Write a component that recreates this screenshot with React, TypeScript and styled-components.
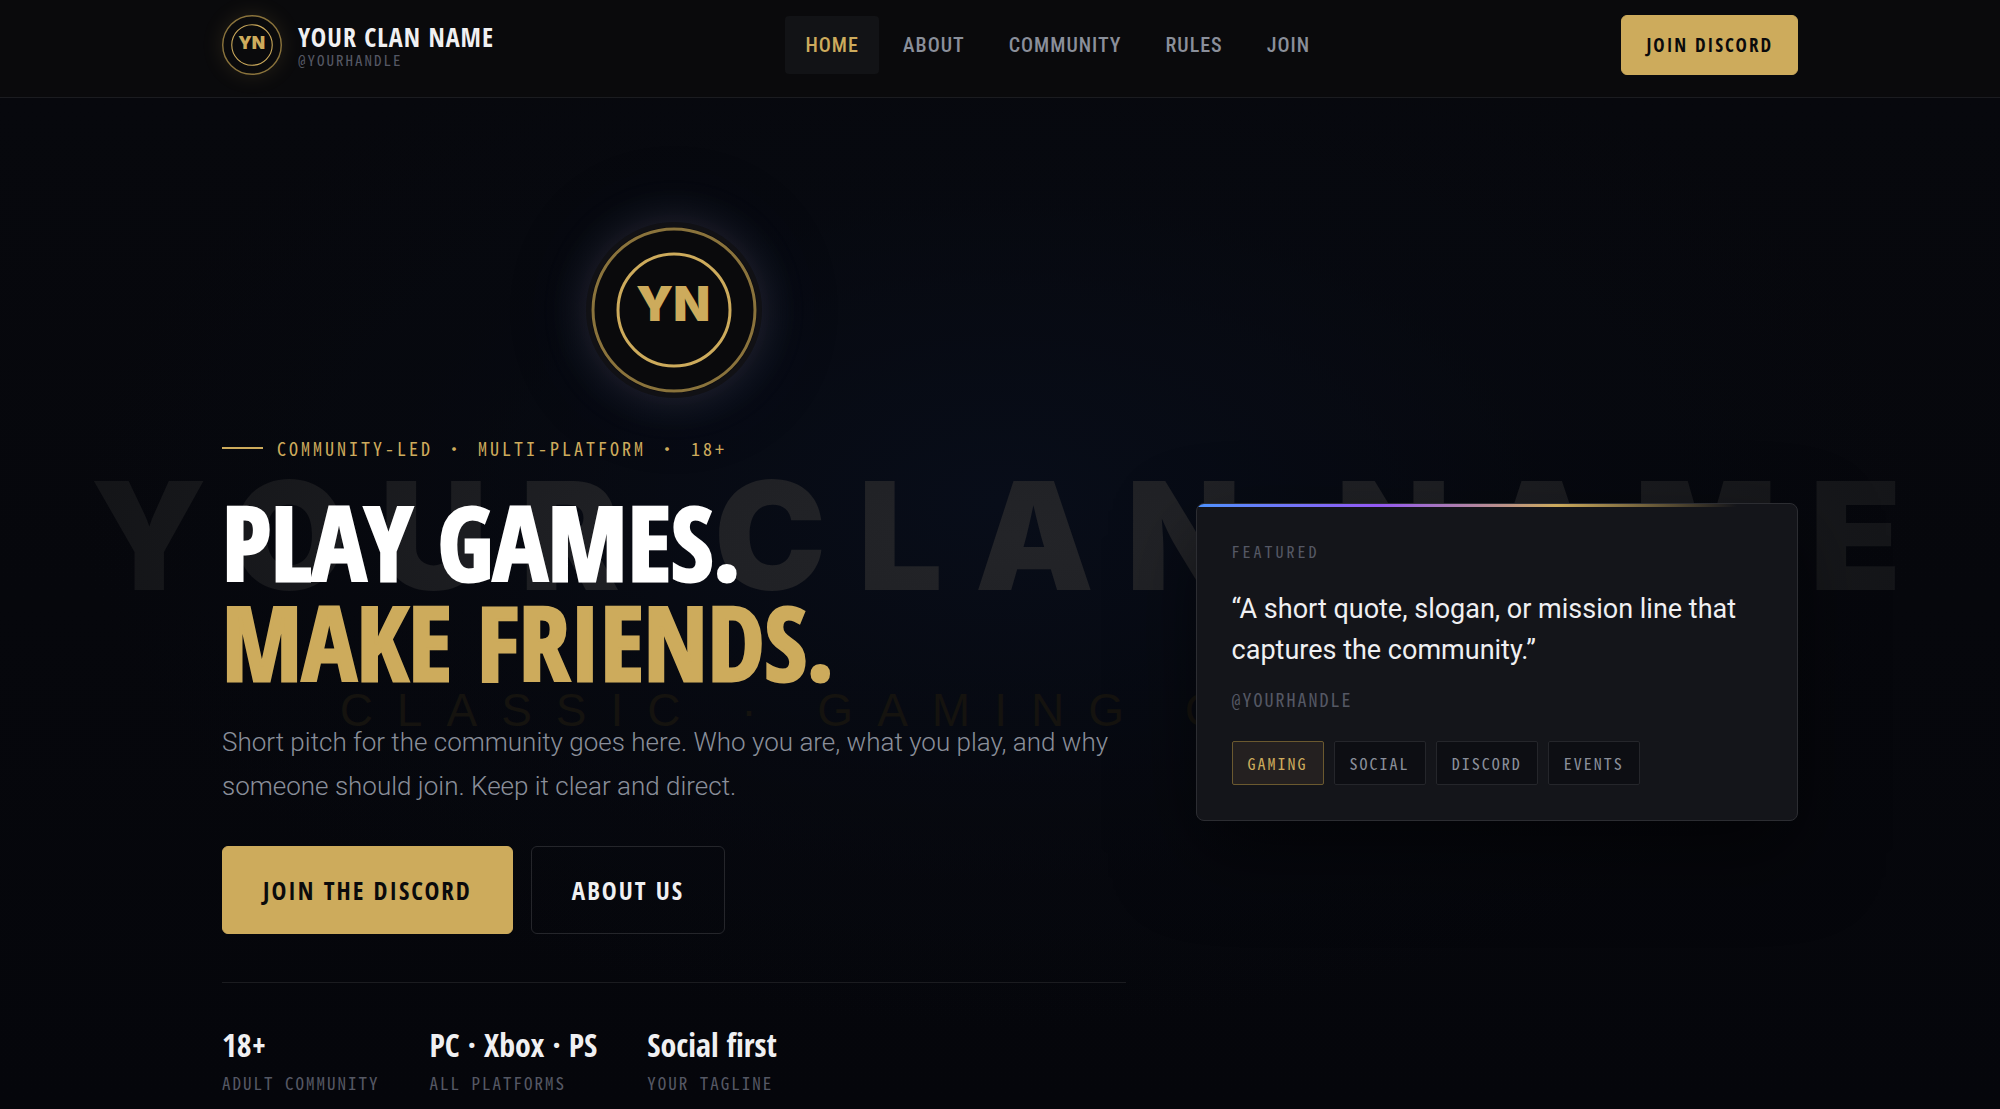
import React from 'react';
import styled, { createGlobalStyle, ThemeProvider } from 'styled-components';

const theme = {
  gold: '#cdab5c',
  white: '#f0f0f2',
  muted: '#8a8f9a',
  dim: '#555864',
  ink: '#0a0a0c',
  card: '#14151a',
  line: '#1b1c20',
  display: '"Open Sans Condensed", "Roboto Condensed", "Open Sans", sans-serif',
  condensed: '"Roboto Condensed", Roboto, sans-serif',
  body: 'Roboto, "Liberation Sans", sans-serif',
  mono: '"Noto Sans Mono CJK SC", "Roboto Mono", "Liberation Mono", monospace',
  black: 'Inter, "Liberation Sans", sans-serif',
};

const GlobalStyle = createGlobalStyle`
  *, *::before, *::after { box-sizing: border-box; }
  html { background: #05060b; }
  body {
    margin: 0;
    color: #f0f0f2;
    font-family: Roboto, "Liberation Sans", sans-serif;
    overflow-x: hidden;
  }
  h1, p, figure, blockquote, dl, dd, ul { margin: 0; padding: 0; }
  a { color: inherit; text-decoration: none; }
`;

const Page = styled.div`
  display: flex;
  flex-direction: column;
  min-height: 100vh;
`;

const Header = styled.header`
  padding-left: 20px;
  background: ${p => p.theme.ink};
  border-bottom: 1px solid ${p => p.theme.line};
`;

const Container = styled.div`
  width: 100%;
  max-width: 1576px;
  margin: 0 auto;
`;

const HeaderBar = styled(Container)`
  display: flex;
  align-items: center;
  justify-content: space-between;
  padding: 15px 0 22px;
`;

const Brand = styled.a`
  display: flex;
  align-items: center;
  gap: 16px;
`;

const BrandText = styled.span`
  display: flex;
  flex-direction: column;
  padding-top: 4px;
`;

const BrandName = styled.span`
  font: 700 26px/26px ${p => p.theme.display};
  letter-spacing: 1px;
`;

const Handle = styled.span`
  color: ${p => p.theme.dim};
  font: 400 15px/20px ${p => p.theme.mono};
  letter-spacing: 2px;
`;

const Nav = styled.nav`
  display: flex;
  gap: 4px;
`;

const NavLink = styled.a<{ $active?: boolean }>`
  padding: 0 20px;
  border-radius: 4px;
  color: ${p => (p.$active ? p.theme.gold : p.theme.muted)};
  background: ${p => (p.$active ? '#121316' : 'transparent')};
  font: 500 20px/58px ${p => p.theme.condensed};
  letter-spacing: 1px;
`;

const Button = styled.a<{ $large?: boolean; $outline?: boolean }>`
  display: inline-flex;
  align-items: center;
  height: ${p => (p.$large ? 88 : 60)}px;
  padding: 0 ${p => (p.$large ? 40 : 24)}px;
  border: 1px solid ${p => (p.$outline ? '#25262b' : p.theme.gold)};
  border-radius: 6px;
  background: ${p => (p.$outline ? 'transparent' : p.theme.gold)};
  color: ${p => (p.$outline ? p.theme.white : p.theme.ink)};
  font: 700 ${p => (p.$large ? 25 : 19)}px/32px ${p => p.theme.display};
  letter-spacing: 2px;
  white-space: nowrap;
`;

const Badge = styled.span<{ $hero?: boolean }>`
  display: block;
  flex: none;
  width: ${p => (p.$hero ? 176 : 60)}px;
  height: ${p => (p.$hero ? 176 : 60)}px;
  border: ${p => (p.$hero ? '5px solid #111115' : '0')};
  border-radius: 50%;
  background: ${p => p.theme.ink};
  box-shadow: ${p =>
    p.$hero
      ? '0 0 46px rgba(190, 180, 215, 0.18), 0 0 110px rgba(40, 60, 120, 0.08)'
      : '0 0 22px rgba(205, 171, 92, 0.14)'};
  svg { display: block; width: 100%; height: 100%; }
`;

const EmblemText = styled.text`
  fill: ${p => p.theme.gold};
  font: 900 48px ${p => p.theme.black};
  text-anchor: middle;
`;

const Hero = styled.main`
  position: relative;
  flex: 1;
  padding: 124px 0 0 20px;
  overflow: hidden;
  background:
    radial-gradient(ellipse 46% 52% at 50% 40%, #080d19 0%, rgba(7, 10, 18, 0.5) 60%, transparent 100%),
    linear-gradient(#07080d, #05060b);
`;

const Watermark = styled.div`
  position: absolute;
  inset: 0 0 0 24px;
  display: flex;
  flex-direction: column;
  align-items: center;
  justify-content: center;
  gap: 52px;
  white-space: nowrap;
  user-select: none;
`;

const WatermarkTitle = styled.span`
  font: 900 150px/160px ${p => p.theme.black};
  letter-spacing: 32px;
  color: transparent;
  background: radial-gradient(ellipse 55% 200% at 50% 50%, #232428 0%, #1f2024 40%, #121316 100%);
  background-clip: text;
  -webkit-background-clip: text;
`;

const WatermarkSub = styled.span`
  color: #15130f;
  font: 400 46px/84px "Liberation Sans", Arial, sans-serif;
  letter-spacing: 24px;
`;

const HeroGrid = styled(Container)`
  position: relative;
  display: grid;
  grid-template-columns: minmax(0, 3fr) minmax(0, 2fr);
  gap: 70px;
  align-items: center;
`;

const Intro = styled.section`
  display: flex;
  flex-direction: column;
  padding-bottom: 8px;
`;

const EmblemRow = styled.div`
  display: flex;
  justify-content: center;
  margin-bottom: 38px;
`;

const Eyebrow = styled.p`
  display: flex;
  align-items: center;
  gap: 14px;
  margin-bottom: 32px;
  color: ${p => p.theme.gold};
  font: 400 18px/24px ${p => p.theme.mono};
  letter-spacing: 3px;
  &::before {
    content: '';
    width: 41px;
    height: 2px;
    background: ${p => p.theme.gold};
  }
`;

const Headline = styled.h1`
  margin-bottom: 28px;
  font: 700 102px/100px ${p => p.theme.display};
`;

const HeadlineLine = styled.span<{ $gold?: boolean }>`
  display: block;
  color: ${p => (p.$gold ? p.theme.gold : '#fff')};
  -webkit-text-stroke: 3px ${p => (p.$gold ? p.theme.gold : '#fff')};
`;

const Pitch = styled.p`
  margin-bottom: 38px;
  color: ${p => p.theme.muted};
  font: 300 26px/44px ${p => p.theme.body};
`;

const Actions = styled.div`
  display: flex;
  gap: 18px;
  margin-bottom: 48px;
`;

const Stats = styled.dl`
  display: flex;
  gap: 50px;
  padding-top: 42px;
  border-top: 1px solid ${p => p.theme.line};
`;

const Stat = styled.div`
  display: flex;
  flex-direction: column-reverse;
  gap: 8px;
`;

const StatValue = styled.dd`
  font: 700 32px/40px ${p => p.theme.display};
`;

const StatLabel = styled.dt`
  color: ${p => p.theme.dim};
  font: 400 17px/20px ${p => p.theme.mono};
  letter-spacing: 2px;
`;

const CardShadow = styled.div`
  border-radius: 8px;
  box-shadow: 0 32px 80px rgba(0, 0, 0, 0.5);
`;

const Card = styled.figure`
  position: relative;
  padding: 35px;
  border: 1px solid #2c2d32;
  border-radius: 8px;
  overflow: hidden;
  background: ${p => p.theme.card};
  &::before {
    content: '';
    position: absolute;
    top: 0;
    left: 0;
    right: 0;
    height: 3px;
    background: linear-gradient(90deg, #4f93ff, #9459f5 30%, ${p => p.theme.gold} 60%, transparent 90%);
  }
`;

const CardLabel = styled.p`
  margin-bottom: 26px;
  color: ${p => p.theme.dim};
  font: 400 16px/24px ${p => p.theme.mono};
  letter-spacing: 3px;
`;

const Quote = styled.blockquote`
  margin-bottom: 16px;
  font: 400 27px/41px ${p => p.theme.body};
`;

const CardHandle = styled.figcaption`
  margin-bottom: 30px;
  color: ${p => p.theme.dim};
  font: 400 18px/24px ${p => p.theme.mono};
  letter-spacing: 2px;
`;

const Tags = styled.ul`
  display: flex;
  flex-wrap: wrap;
  gap: 10px;
  list-style: none;
`;

const Tag = styled.li<{ $active?: boolean }>`
  padding: 0 15px;
  border: 1px solid ${p => (p.$active ? '#6b592f' : '#25262b')};
  border-radius: 2px;
  background: ${p => (p.$active ? '#242020' : '#0d0e13')};
  color: ${p => (p.$active ? p.theme.gold : p.theme.muted)};
  font: 400 16px/42px ${p => p.theme.mono};
  letter-spacing: 2px;
`;

function Emblem({ hero }: { hero?: boolean }) {
  return (
    <Badge $hero={hero}>
      <svg viewBox="0 0 166 166" role="img" aria-label="Clan emblem">
        <circle cx="83" cy="83" r="81" fill="none" stroke="#8a733c" strokeWidth={hero ? 3 : 4} />
        <circle cx="83" cy="83" r="56" fill="none" stroke="#cdab5c" strokeWidth="3" />
        <EmblemText x="82" y="94">YN</EmblemText>
      </svg>
    </Badge>
  );
}

const links = ['Home', 'About', 'Community', 'Rules', 'Join'];
const tags = ['GAMING', 'SOCIAL', 'DISCORD', 'EVENTS'];
const stats = [
  { value: '18+', label: 'ADULT COMMUNITY' },
  { value: 'PC · Xbox · PS', label: 'ALL PLATFORMS' },
  { value: 'Social first', label: 'YOUR TAGLINE' },
];

export default function App() {
  return (
    <ThemeProvider theme={theme}>
      <GlobalStyle />
      <Page>
        <Header>
          <HeaderBar>
            <Brand href="#home">
              <Emblem />
              <BrandText>
                <BrandName>YOUR CLAN NAME</BrandName>
                <Handle>@YOURHANDLE</Handle>
              </BrandText>
            </Brand>
            <Nav aria-label="Main">
              {links.map((link, i) => (
                <NavLink key={link} href={`#${link.toLowerCase()}`} $active={i === 0}>
                  {link.toUpperCase()}
                </NavLink>
              ))}
            </Nav>
            <Button href="#discord">JOIN DISCORD</Button>
          </HeaderBar>
        </Header>

        <Hero>
          <Watermark aria-hidden="true">
            <WatermarkTitle>YOUR CLAN NAME</WatermarkTitle>
            <WatermarkSub>CLASSIC · GAMING COMMUNITY</WatermarkSub>
          </Watermark>
          <HeroGrid>
            <Intro>
              <EmblemRow>
                <Emblem hero />
              </EmblemRow>
              <Eyebrow>COMMUNITY-LED · MULTI-PLATFORM · 18+</Eyebrow>
              <Headline>
                <HeadlineLine>PLAY GAMES.</HeadlineLine>
                <HeadlineLine $gold>MAKE FRIENDS.</HeadlineLine>
              </Headline>
              <Pitch>
                Short pitch for the community goes here. Who you are, what you play, and why
                someone should join. Keep it clear and direct.
              </Pitch>
              <Actions>
                <Button href="#discord" $large>JOIN THE DISCORD</Button>
                <Button href="#about" $large $outline>ABOUT US</Button>
              </Actions>
              <Stats>
                {stats.map(stat => (
                  <Stat key={stat.label}>
                    <StatLabel>{stat.label}</StatLabel>
                    <StatValue>{stat.value}</StatValue>
                  </Stat>
                ))}
              </Stats>
            </Intro>
            <CardShadow>
              <Card>
                <CardLabel>FEATURED</CardLabel>
                <Quote>“A short quote, slogan, or mission line that captures the community.”</Quote>
                <CardHandle>@YOURHANDLE</CardHandle>
                <Tags>
                  {tags.map((tag, i) => (
                    <Tag key={tag} $active={i === 0}>{tag}</Tag>
                  ))}
                </Tags>
              </Card>
            </CardShadow>
          </HeroGrid>
        </Hero>
      </Page>
    </ThemeProvider>
  );
}
